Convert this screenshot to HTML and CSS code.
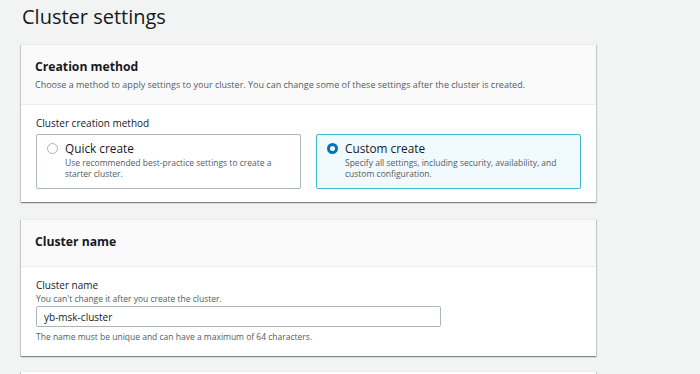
FILE: index.html
```html
<!DOCTYPE html>
<html lang="en">
<head>
    <meta charset="UTF-8">
    <meta name="viewport" content="width=device-width, initial-scale=1.0">
    <title>Cluster settings</title>

    <link rel="stylesheet" href="styles.css">

</head>
<body>

    <div id="wrapper">

        <h1 class="page_title">Cluster settings</h1>

        <div class="panel">

            <div class="panel_header">
                <h2 class="panel_title">Creation method</h2>
                <p class="panel_desc">Choose a method to apply settings to your cluster. You can change some of these settings after the cluster is created.</p>
            </div>

            <div class="panel_body">

                <div class="field_label">Cluster creation method</div>

                <div class="tiles">

                    <label class="tile">
                        <span class="radio"></span>
                        <span class="tile_text">
                            <span class="tile_title">Quick create</span>
                            <span class="tile_desc">Use recommended best-practice settings to create a starter cluster.</span>
                        </span>
                    </label>

                    <label class="tile selected">
                        <span class="radio checked"></span>
                        <span class="tile_text">
                            <span class="tile_title">Custom create</span>
                            <span class="tile_desc">Specify all settings, including security, availability, and custom configuration.</span>
                        </span>
                    </label>

                </div>

            </div>

        </div>

        <div class="panel">

            <div class="panel_header short">
                <h2 class="panel_title">Cluster name</h2>
            </div>

            <div class="panel_body">

                <div class="field_label">Cluster name</div>
                <div class="field_hint">You can't change it after you create the cluster.</div>

                <input class="text_input" type="text" value="yb-msk-cluster">

                <div class="field_hint footer">The name must be unique and can have a maximum of 64 characters.</div>

            </div>

        </div>

        <div class="panel stub"></div>

    </div>

</body>
</html>
```

FILE: styles.css
```css
*{
    font-family: "Open Sans", "Noto Sans", sans-serif;
    box-sizing: border-box;
}

body{
    margin: 0;
    padding: 0;

    width: 700px;
    height: 374px;
    overflow: hidden;

    background-color: #f2f3f3;
    color: #16191f;
}

#wrapper{
    height: 374px;
    overflow: hidden;
    padding: 0 104px 0 21px;
}

.page_title{
    margin: 0;
    padding: 4px 0 0 1px;
    height: 44px;

    font-size: 20px;
    font-weight: 400;
    line-height: 26px;
}

.panel{
    background-color: #ffffff;
    border-top: 1px solid #eaeded;
    box-shadow: 0 1px 1px 0 rgba(0, 28, 36, 0.3), 1px 1px 1px 0 rgba(0, 28, 36, 0.15), -1px 1px 1px 0 rgba(0, 28, 36, 0.15);
    margin-bottom: 17px;
}

.panel_header{
    height: 60px;
    padding: 12px 14px 0;

    background-color: #fafafa;
    border-bottom: 1px solid #eaeded;
}

.panel_header.short{
    height: 47px;
    padding-top: 12px;
}

.panel_title{
    margin: 0;

    font-size: 12.2px;
    font-weight: 700;
    line-height: 20px;
}

.panel_desc{
    margin: 0;

    font-size: 9px;
    line-height: 16px;
    color: #545b64;
}

.panel_body{
    padding: 10px 15px 13px;
}

.field_label{
    font-size: 10px;
    line-height: 16px;
}

.field_hint{
    font-size: 8.5px;
    line-height: 12px;
    color: #545b64;
}

.field_hint.footer{
    margin-top: 4px;
}

.tiles{
    display: grid;
    grid-template-columns: 265px 265px;
    gap: 15px;
    margin-top: 3px;
}

.tile{
    display: flex;
    gap: 7px;
    height: 55px;
    padding: 5px 10px;

    border: 1px solid #aab7b8;
    border-radius: 2px;
    cursor: pointer;
}

.tile.selected{
    background-color: #f1faff;
    border-color: #44b9d6;
}

.radio{
    flex: none;
    width: 11px;
    height: 11px;
    margin-top: 3px;

    border: 1px solid #aab7b8;
    border-radius: 50%;
    background-color: #ffffff;
}

.radio.checked{
    border: 3.5px solid #0073bb;
}

.tile_text{
    display: flex;
    flex-direction: column;
}

.tile_title{
    font-size: 11.8px;
    line-height: 17px;
}

.tile_desc{
    font-size: 8.5px;
    line-height: 11px;
    color: #545b64;
}

.text_input{
    display: block;
    width: 405px;
    height: 21px;
    margin-top: 1px;
    padding: 0 7px;

    border: 1px solid #aab7b8;
    border-radius: 2px;
    font-size: 10px;
    color: #16191f;
}

.stub{
    height: 40px;
    margin-top: -2px;
}
```
